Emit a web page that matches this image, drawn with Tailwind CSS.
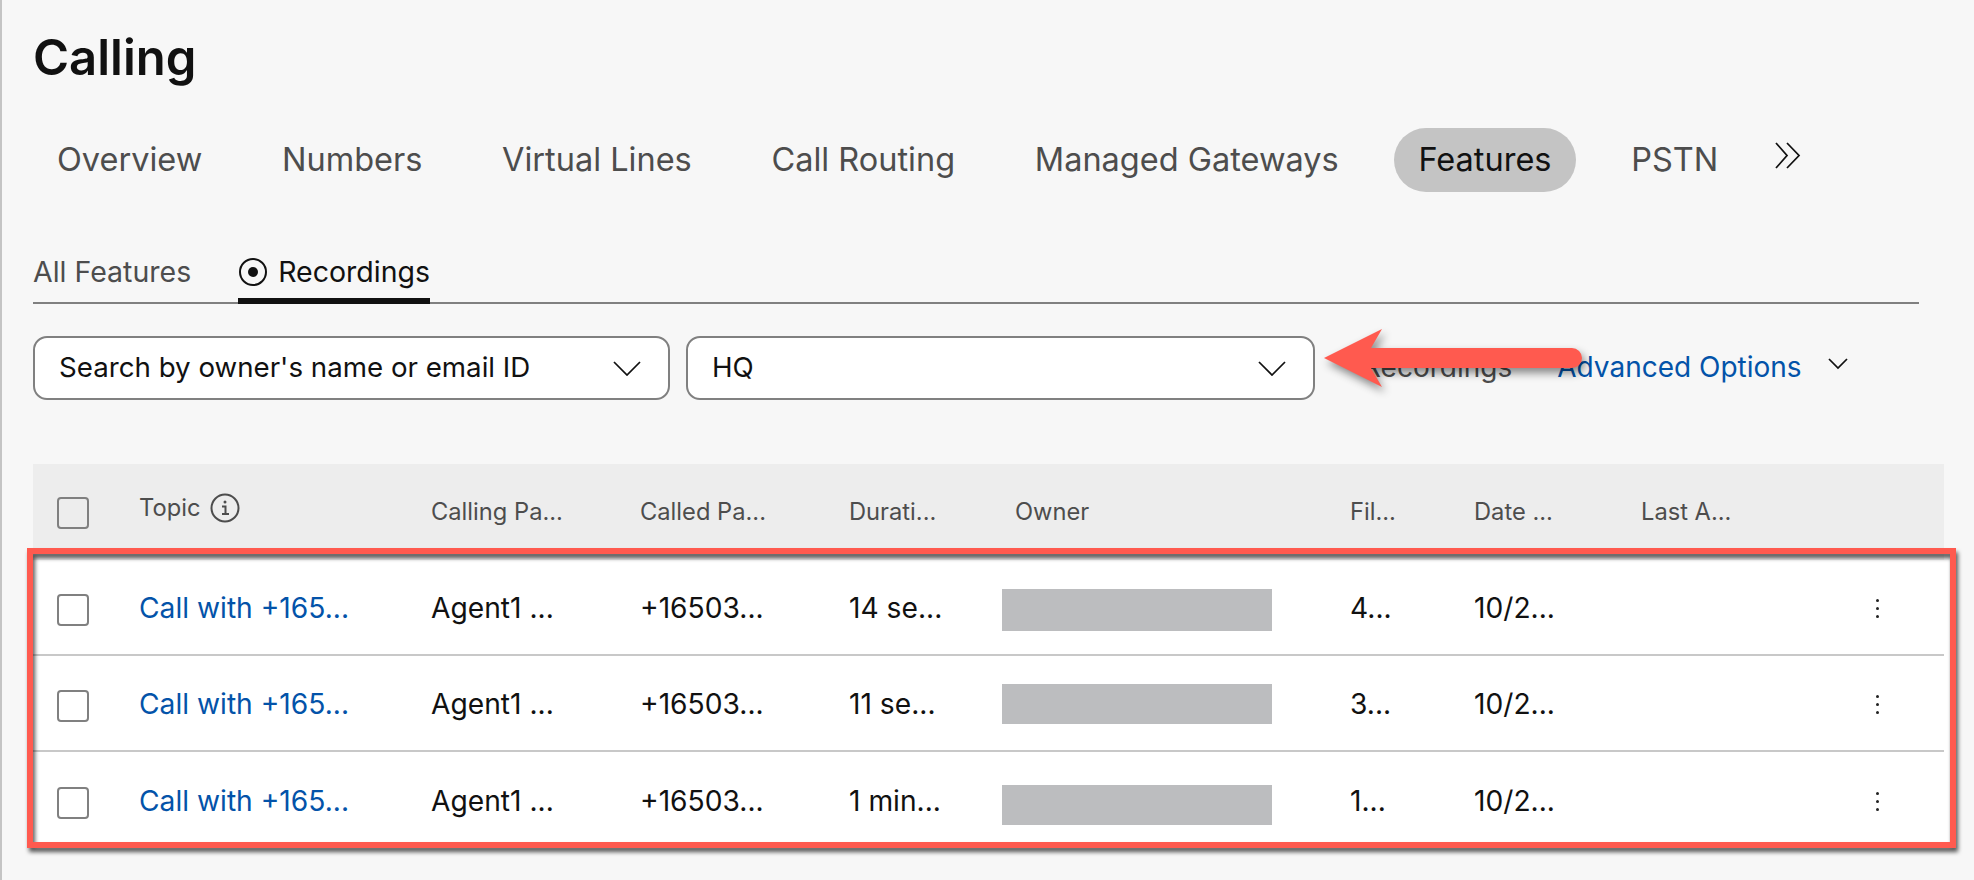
<!DOCTYPE html>
<html lang="en">
<head>
    <meta charset="UTF-8">
    <title>Calling</title>
    <script src="https://cdn.jsdelivr.net/npm/@tailwindcss/browser@4"></script>
</head>
<body class="bg-[#f7f7f7] font-['Inter',sans-serif] text-[#111]">
<div class="relative w-[1974px] h-[880px] overflow-hidden border-l-2 border-[#c4c4c4] pl-[31px]">
    <h1 class="pt-[30px] h-[86px] flex items-center text-[49px] font-semibold leading-[56px] text-[#111]">Calling</h1>

    <!-- Main tabs -->
    <nav class="mt-[42px] h-16 flex items-center gap-[31.700px] text-[32.500px] text-[#4d4d4d]">
        <span class="px-6 h-16 flex items-center">Overview</span>
        <span class="px-6 h-16 flex items-center">Numbers</span>
        <span class="px-6 h-16 flex items-center">Virtual Lines</span>
        <span class="px-6 h-16 flex items-center">Call Routing</span>
        <span class="px-6 h-16 flex items-center">Managed Gateways</span>
        <span class="px-6 h-16 flex items-center rounded-full bg-[#c4c4c4] text-[#111]">Features</span>
        <span class="px-6 h-16 flex items-center">PSTN</span>
        <svg class="ml-0 -mt-[10px]" width="28" height="27" viewBox="0 0 28 27" fill="none" stroke="#111" stroke-width="1.750"><path d="M2 1l11 12.500L2 26M13 1l12 12.500L13 26"/></svg>
    </nav>

    <!-- Sub tabs -->
    <div class="mt-[54px] h-[58px] w-[1886px] flex items-end border-b-2 border-[#808080] text-[28.500px]">
        <span class="h-[58px] -mb-[2px] flex items-center border-b-[6px] border-transparent text-[#4d4d4d]">All Features</span>
        <span class="ml-[47px] h-[58px] -mb-[2px] flex items-center gap-[10px] border-b-[6px] border-[#111] text-[#111]">
            <svg width="30" height="30" viewBox="0 0 30 30" fill="none"><circle cx="15" cy="15" r="13" stroke="#111" stroke-width="2"/><circle cx="15" cy="15" r="5" fill="#111"/></svg>
            Recordings
        </span>
    </div>

    <!-- Filters -->
    <div class="mt-8 flex items-center text-[27.700px]">
        <div class="w-[637px] h-16 flex items-center justify-between pl-[24px] pr-[27px] bg-white rounded-[14px] border-2 border-[#808080]">
            <span>Search by owner's name or email ID</span>
            <svg width="28" height="15" viewBox="0 0 28 15" fill="none" stroke="#111" stroke-width="1.750"><path d="M1 1l13 13L27 1"/></svg>
        </div>
        <div class="ml-4 w-[629px] h-16 flex items-center justify-between pl-[24px] pr-[27px] bg-white rounded-[14px] border-2 border-[#808080]">
            <span>HQ</span>
            <svg width="28" height="15" viewBox="0 0 28 15" fill="none" stroke="#111" stroke-width="1.750"><path d="M1 1l13 13L27 1"/></svg>
        </div>
        <span class="ml-[48px] -mt-[2px] text-[28px] text-[#4d4d4d]">Recordings</span>
        <span class="ml-[45px] -mt-[2px] text-[28px] text-[#0353a9]">Advanced Options</span>
        <svg class="ml-[26px] -mt-[8px]" width="20" height="12" viewBox="0 0 20 12" fill="none" stroke="#111" stroke-width="1.750"><path d="M1 1l9 9 9-9"/></svg>
    </div>

    <!-- Table header -->
    <div class="mt-16 w-[1911px] h-24 bg-[#ededed] grid grid-cols-[106px_292px_209px_209px_166px_335px_124px_167px_237px_66px] items-center text-[23.700px] text-[#4d4d4d]">
        <span class="ml-6 mt-[2px] w-8 h-8 rounded-[4px] border-2 border-[#808080]"></span>
        <span class="flex items-center gap-[10px] -mt-2">Topic
            <svg width="30" height="30" viewBox="0 0 30 30" fill="none" stroke="#4d4d4d" stroke-width="2"><circle cx="15" cy="15" r="13.500"/><path d="M12 13.500h3.500v7M12 21h7"/><circle cx="15" cy="9" r="1.500" fill="#4d4d4d" stroke="none"/></svg>
        </span>
        <span>Calling Pa...</span>
        <span>Called Pa...</span>
        <span>Durati...</span>
        <span>Owner</span>
        <span>Fil...</span>
        <span>Date ...</span>
        <span>Last A...</span>
        <span></span>
    </div>

    <!-- Table rows -->
    <div class="w-[1916px] bg-white text-[28.200px]">
        <div class="w-[1911px] h-24 pt-[6px] border-b-2 border-[#c8c8c8] grid grid-cols-[106px_292px_209px_209px_166px_335px_124px_167px_237px_66px] items-center">
            <span class="ml-6 w-8 h-8 rounded-[4px] border-2 border-[#808080]"></span>
            <span class="text-[#0353a9] -mt-1">Call with +165...</span>
            <span class="-mt-1">Agent1 ...</span>
            <span class="-mt-1">+16503...</span>
            <span class="-mt-1">14 se...</span>
            <span class="-ml-[13px] w-[270px] h-[42px] bg-[#bcbdbf]"></span>
            <span class="-mt-1">4...</span>
            <span class="-mt-1">10/2...</span>
            <span></span>
            <span class="-ml-[2px] -mt-1 flex flex-col gap-[5px]"><i class="w-[3px] h-[3px] rounded-full bg-[#222]"></i><i class="w-[3px] h-[3px] rounded-full bg-[#222]"></i><i class="w-[3px] h-[3px] rounded-full bg-[#222]"></i></span>
        </div>
        <div class="w-[1911px] h-24 pt-[6px] border-b-2 border-[#c8c8c8] grid grid-cols-[106px_292px_209px_209px_166px_335px_124px_167px_237px_66px] items-center">
            <span class="ml-6 w-8 h-8 rounded-[4px] border-2 border-[#808080]"></span>
            <span class="text-[#0353a9] -mt-1">Call with +165...</span>
            <span class="-mt-1">Agent1 ...</span>
            <span class="-mt-1">+16503...</span>
            <span class="-mt-1">11 se...</span>
            <span class="-ml-[13px] w-[270px] h-10 -mt-1 bg-[#bcbdbf]"></span>
            <span class="-mt-1">3...</span>
            <span class="-mt-1">10/2...</span>
            <span></span>
            <span class="-ml-[2px] -mt-1 flex flex-col gap-[5px]"><i class="w-[3px] h-[3px] rounded-full bg-[#222]"></i><i class="w-[3px] h-[3px] rounded-full bg-[#222]"></i><i class="w-[3px] h-[3px] rounded-full bg-[#222]"></i></span>
        </div>
        <div class="w-[1911px] h-24 pt-[6px] grid grid-cols-[106px_292px_209px_209px_166px_335px_124px_167px_237px_66px] items-center">
            <span class="ml-6 w-8 h-8 rounded-[4px] border-2 border-[#808080]"></span>
            <span class="text-[#0353a9] -mt-1">Call with +165...</span>
            <span class="-mt-1">Agent1 ...</span>
            <span class="-mt-1">+16503...</span>
            <span class="-mt-1">1 min...</span>
            <span class="-ml-[13px] w-[270px] h-10 mt-1 bg-[#bcbdbf]"></span>
            <span class="-mt-1">1...</span>
            <span class="-mt-1">10/2...</span>
            <span></span>
            <span class="-ml-[2px] -mt-1 flex flex-col gap-[5px]"><i class="w-[3px] h-[3px] rounded-full bg-[#222]"></i><i class="w-[3px] h-[3px] rounded-full bg-[#222]"></i><i class="w-[3px] h-[3px] rounded-full bg-[#222]"></i></span>
        </div>
    </div>

    <!-- Annotations drawn over the page -->
    <div class="absolute left-[25px] top-[548px] w-[1929px] h-[300px] border-[6px] border-[#ff5a4f] drop-shadow-[2px_4px_2px_rgba(0,0,0,0.65)]"></div>
    <svg class="absolute left-[1318px] top-[325px] drop-shadow-[3px_5px_4px_rgba(0,0,0,0.45)]" width="270" height="70" viewBox="1320 327 270 70" fill="#ff5a4f"><path d="M1324 360L1382 331L1371 350H1572A10 10 0 0 1 1572 370H1371L1382 389Z"/></svg>
</div>
</body>
</html>
